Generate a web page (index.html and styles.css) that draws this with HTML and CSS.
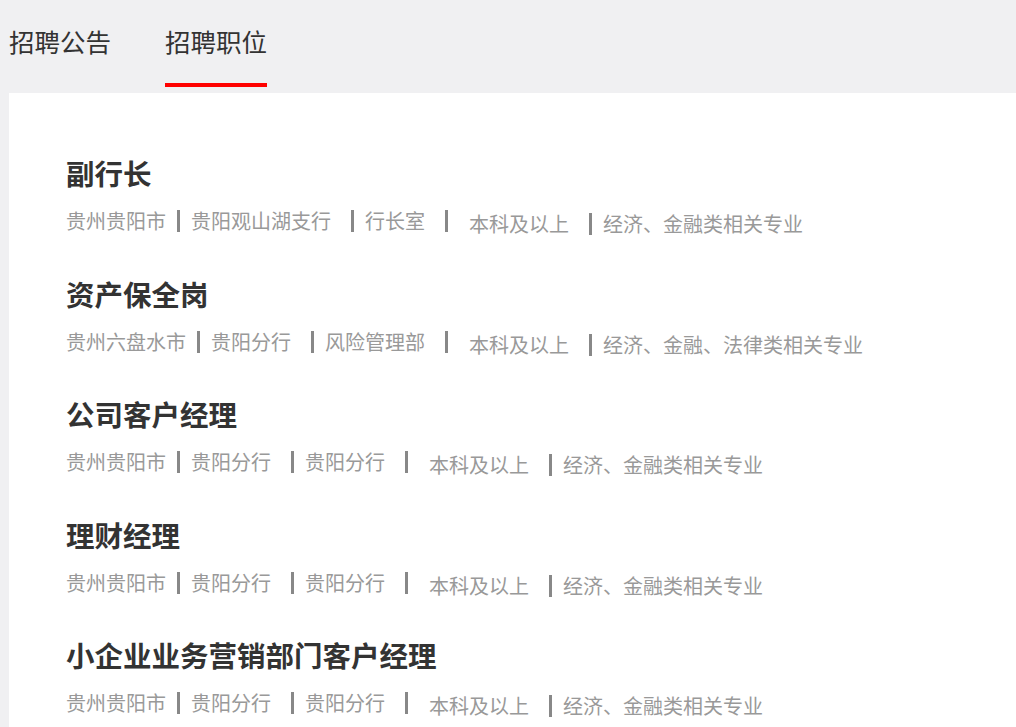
FILE: index.html
```html
<!DOCTYPE html>
<html lang="zh-CN">
<head>
<meta charset="utf-8">
<title>招聘职位</title>
<link rel="stylesheet" href="styles.css">
</head>
<body>
<div class="page">
  <nav class="tabs">
    <div class="tab">招聘公告</div>
    <div class="tab active">招聘职位</div>
  </nav>
  <main class="card">
    <ul class="jobs">
      <li class="job">
        <h3 class="title">副行长</h3>
        <div class="meta">
          <span class="tag">贵州贵阳市</span><span class="sep"></span>
          <span class="tag sp">贵阳观山湖支行</span><span class="sep"></span>
          <span class="tag sp">行长室</span><span class="sep"></span>
          <span class="tag lsp sp low">本科及以上</span><span class="sep low"></span>
          <span class="tag low">经济、金融类相关专业</span>
        </div>
      </li>
      <li class="job">
        <h3 class="title">资产保全岗</h3>
        <div class="meta">
          <span class="tag">贵州六盘水市</span><span class="sep"></span>
          <span class="tag sp">贵阳分行</span><span class="sep"></span>
          <span class="tag sp">风险管理部</span><span class="sep"></span>
          <span class="tag lsp sp low">本科及以上</span><span class="sep low"></span>
          <span class="tag low">经济、金融、法律类相关专业</span>
        </div>
      </li>
      <li class="job">
        <h3 class="title">公司客户经理</h3>
        <div class="meta">
          <span class="tag">贵州贵阳市</span><span class="sep"></span>
          <span class="tag sp">贵阳分行</span><span class="sep"></span>
          <span class="tag sp">贵阳分行</span><span class="sep"></span>
          <span class="tag lsp sp low">本科及以上</span><span class="sep low"></span>
          <span class="tag low">经济、金融类相关专业</span>
        </div>
      </li>
      <li class="job">
        <h3 class="title">理财经理</h3>
        <div class="meta">
          <span class="tag">贵州贵阳市</span><span class="sep"></span>
          <span class="tag sp">贵阳分行</span><span class="sep"></span>
          <span class="tag sp">贵阳分行</span><span class="sep"></span>
          <span class="tag lsp sp low">本科及以上</span><span class="sep low"></span>
          <span class="tag low">经济、金融类相关专业</span>
        </div>
      </li>
      <li class="job">
        <h3 class="title">小企业业务营销部门客户经理</h3>
        <div class="meta">
          <span class="tag">贵州贵阳市</span><span class="sep"></span>
          <span class="tag sp">贵阳分行</span><span class="sep"></span>
          <span class="tag sp">贵阳分行</span><span class="sep"></span>
          <span class="tag lsp sp low">本科及以上</span><span class="sep low"></span>
          <span class="tag low">经济、金融类相关专业</span>
        </div>
      </li>
    </ul>
  </main>
</div>
</body>
</html>
```

FILE: styles.css
```css
html, body {
  margin: 0;
  padding: 0;
  height: 100%;
  overflow: hidden;
}

body {
  background: #f0f0f2;
  font-family: "Noto Sans CJK SC", "Microsoft YaHei", sans-serif;
  color: #333;
}

.page {
  display: flex;
  flex-direction: column;
  height: 100%;
}

.tabs {
  display: flex;
  gap: 54px;
  padding: 23px 0 6px 9px;
}

.tab {
  font-size: 25.5px;
  line-height: 36px;
  color: #333;
  padding-bottom: 24px;
  border-bottom: 4px solid transparent;
}

.tab.active {
  border-bottom-color: #ff0000;
}

.card {
  flex: 1;
  margin-left: 9px;
  background: #fff;
  padding: 60px 0 0 57px;
}

.jobs {
  list-style: none;
  margin: 0;
  padding: 0;
  display: flex;
  flex-direction: column;
  gap: 38.5px;
}

.job {
  display: flex;
  flex-direction: column;
  gap: 17px;
}

.title {
  margin: 0;
  font-size: 28.5px;
  line-height: 40px;
  font-weight: 700;
  color: #333;
}

.meta {
  display: flex;
  align-items: flex-start;
}

.tag {
  font-size: 20px;
  line-height: 22px;
  color: #999;
  padding: 0 11px;
  white-space: nowrap;
}

.tag:first-child {
  padding-left: 0;
}

.tag.sp {
  padding-right: 20px;
}

.tag.lsp {
  padding-left: 21px;
}

.tag.low,
.sep.low {
  margin-top: 3px;
}

.sep {
  width: 3px;
  height: 22px;
  background: #888;
  flex: none;
}
```
